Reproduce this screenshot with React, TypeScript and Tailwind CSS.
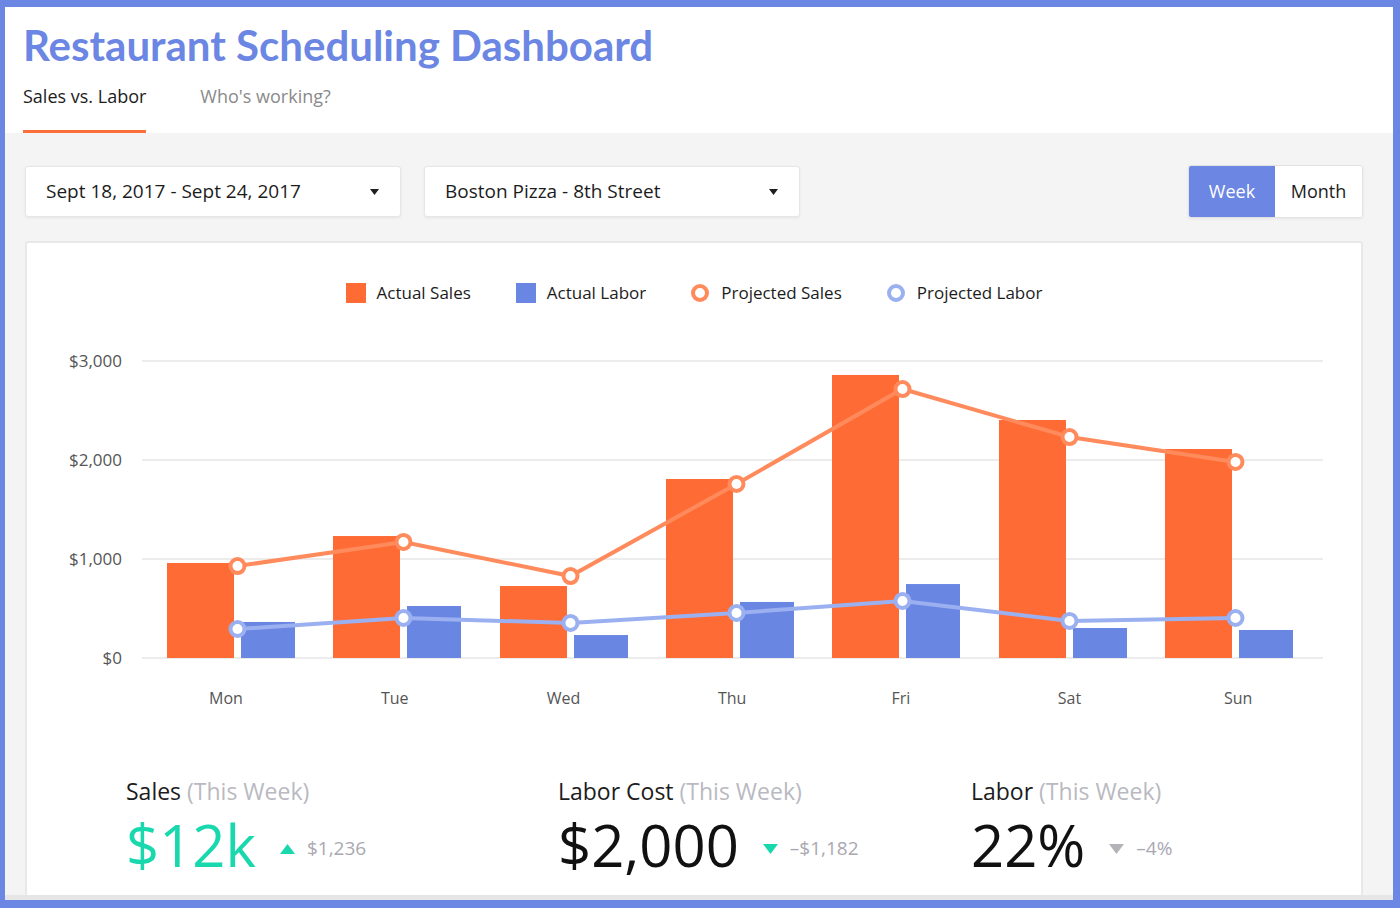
import React from 'react';

const days = ['Mon', 'Tue', 'Wed', 'Thu', 'Fri', 'Sat', 'Sun'];
const sales = [960, 1232, 727, 1808, 2859, 2404, 2111];
const labor = [364, 525, 232, 566, 747, 303, 283];
const projSales = [929, 1172, 828, 1758, 2717, 2232, 1980];
const projLabor = [293, 404, 354, 455, 576, 374, 404];

const ZERO = 353;
const SCALE = 0.099;
const y = (v: number) => ZERO - v * SCALE;
const barX = (i: number) => Math.round(140 + i * 166.3);

function Caret() {
  return (
    <svg width="9" height="6" viewBox="0 0 9 6">
      <path d="M0 0 L9 0 L4.5 6 Z" fill="#1f1f1f" />
    </svg>
  );
}

function Chart() {
  const salesPts = projSales.map((v, i) => `${barX(i) + 70.5},${y(v)}`).join(' ');
  const laborPts = projLabor.map((v, i) => `${barX(i) + 70.5},${y(v)}`).join(' ');
  return (
    <svg width="1334" height="420" viewBox="0 0 1334 420" className="block" style={{ fontFamily: "'Open Sans', sans-serif" }}>
      {[3000, 2000, 1000, 0].map((v) => (
        <g key={v}>
          <line x1="115" x2="1296" y1={y(v)} y2={y(v)} stroke="#e6e6e6" strokeWidth="1.5" />
          <text x="95" y={y(v) + 1.5} textAnchor="end" dominantBaseline="middle" fontSize="17" fill="#555">
            {v === 0 ? '$0' : `$${(v / 1000).toFixed(0)},000`}
          </text>
        </g>
      ))}
      {sales.map((v, i) => (
        <rect key={`s${i}`} x={barX(i)} y={y(v)} width="67" height={v * SCALE} fill="#ff6b35" />
      ))}
      {labor.map((v, i) => (
        <rect key={`l${i}`} x={barX(i) + 74} y={y(v)} width="54" height={v * SCALE} fill="#6a86e3" />
      ))}
      <polyline points={salesPts} fill="none" stroke="#ff8a5c" strokeWidth="4" />
      <polyline points={laborPts} fill="none" stroke="#9bb0f0" strokeWidth="4" />
      {projSales.map((v, i) => (
        <circle key={`ps${i}`} cx={barX(i) + 70.5} cy={y(v)} r="7" fill="#fff" stroke="#ff8a5c" strokeWidth="4" />
      ))}
      {projLabor.map((v, i) => (
        <circle key={`pl${i}`} cx={barX(i) + 70.5} cy={y(v)} r="7" fill="#fff" stroke="#9bb0f0" strokeWidth="4" />
      ))}
      {days.map((d, i) => (
        <text key={d} x={199 + i * 168.7} y="395" textAnchor="middle" dominantBaseline="middle" fontSize="16" fill="#555">
          {d}
        </text>
      ))}
    </svg>
  );
}

function Stat({ label, value, valueColor, delta, up, triColor }: { label: string; value: string; valueColor: string; delta: string; up: boolean; triColor: string }) {
  return (
    <div>
      <div className="text-[23px] leading-[28px] text-[#1c1c1c]">
        {label} <span className="text-[#b9b9c1]">(This Week)</span>
      </div>
      <div className="mt-[10px] flex items-center">
        <span className="text-[58px] leading-[60px]" style={{ color: valueColor }}>{value}</span>
        <div className="ml-[24px] flex items-center gap-[12px] pt-[7px]">
          <svg width="15" height="10" viewBox="0 0 15 10">
            <path d={up ? 'M7.5 0 L15 10 L0 10 Z' : 'M0 0 L15 0 L7.5 10 Z'} fill={triColor} />
          </svg>
          <span className="text-[19px] text-[#a9a8b1]">{delta}</span>
        </div>
      </div>
    </div>
  );
}

export default function App() {
  return (
    <div className="w-[1400px] h-[908px] border-t-[7px] border-l-[5px] border-r-[7px] border-b-[8px] border-[#6b86e3] flex flex-col overflow-hidden font-['Open_Sans',sans-serif]">
      {/* Header */}
      <div className="bg-white pl-[18px] pt-[13px]">
        <h1 className="font-['Lato',sans-serif] font-bold text-[42px] leading-[50px] text-[#6b86e3]">
          Restaurant Scheduling Dashboard
        </h1>
        <div className="mt-[14px] flex gap-[54px] text-[18px] leading-[24px]">
          <div className="pb-[22px] border-b-[3px] border-[#ff6f3c] text-[#1c1c1c]">Sales vs. Labor</div>
          <div className="pb-[22px] text-[#8a8a8a]">Who's working?</div>
        </div>
      </div>

      {/* Body */}
      <div className="flex-1 bg-[#f4f4f4] pl-[20px] pr-[30px] pt-[32px] overflow-hidden">
        <div className="flex items-center justify-between h-[53px]">
          <div className="flex gap-[23px]">
            <div className="w-[376px] h-[51px] bg-white border border-[#e6e6e6] rounded-[3px] shadow-[0_1px_3px_rgba(0,0,0,0.06)] flex items-center justify-between pl-[20px] pr-[21px] text-[19px] text-[#1c1c1c]">
              <span>Sept 18, 2017 - Sept 24, 2017</span>
              <Caret />
            </div>
            <div className="w-[376px] h-[51px] bg-white border border-[#e6e6e6] rounded-[3px] shadow-[0_1px_3px_rgba(0,0,0,0.06)] flex items-center justify-between pl-[20px] pr-[21px] text-[19px] text-[#1c1c1c]">
              <span>Boston Pizza - 8th Street</span>
              <Caret />
            </div>
          </div>
          <div className="flex h-[53px] rounded-[3px] border border-[#e3e3e3] overflow-hidden text-[18px] shadow-[0_1px_3px_rgba(0,0,0,0.06)]">
            <div className="w-[86px] bg-[#6b86e3] text-white flex items-center justify-center">Week</div>
            <div className="w-[87px] bg-white text-[#1c1c1c] flex items-center justify-center">Month</div>
          </div>
        </div>

        <div className="mt-[23px] bg-white border-2 border-[#e8e8e8] rounded-[3px] h-[700px]">
          <div className="pt-[38px] flex justify-center items-center gap-[45px] h-[62px] text-[17px] text-[#1c1c1c]">
            <div className="flex items-center gap-[11px]">
              <span className="w-[20px] h-[20px] bg-[#ff6b35]" />
              <span>Actual Sales</span>
            </div>
            <div className="flex items-center gap-[11px]">
              <span className="w-[20px] h-[20px] bg-[#6a86e3]" />
              <span>Actual Labor</span>
            </div>
            <div className="flex items-center gap-[12px]">
              <span className="w-[18px] h-[18px] rounded-full border-4 border-[#ff8a5c] bg-white" />
              <span>Projected Sales</span>
            </div>
            <div className="flex items-center gap-[12px]">
              <span className="w-[18px] h-[18px] rounded-full border-4 border-[#9bb0f0] bg-white" />
              <span>Projected Labor</span>
            </div>
          </div>

          <Chart />

          <div className="mt-[52px] pl-[99px] grid grid-cols-[432px_413px_1fr]">
            <Stat label="Sales" value="$12k" valueColor="#19d8ad" delta="$1,236" up triColor="#19d8ad" />
            <Stat label="Labor Cost" value="$2,000" valueColor="#111" delta="–$1,182" up={false} triColor="#19d8ad" />
            <Stat label="Labor" value="22%" valueColor="#111" delta="–4%" up={false} triColor="#b4b4b8" />
          </div>
        </div>
      </div>
      <div className="h-[5px] bg-[#e6e6e6]" />
    </div>
  );
}
